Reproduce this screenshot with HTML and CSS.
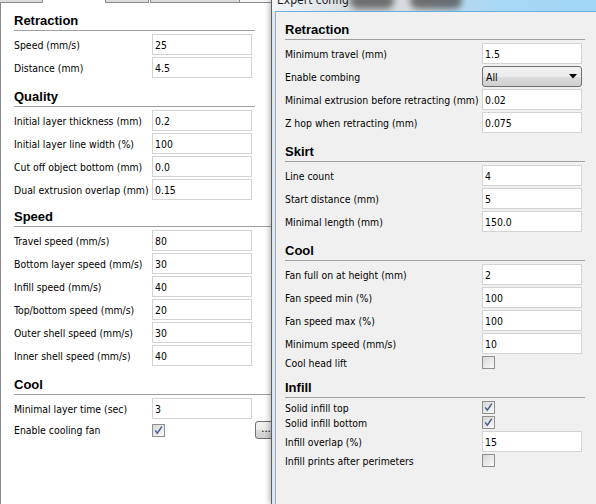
FILE: index.html
```html
<!DOCTYPE html>
<html lang="en">
<head>
    <meta charset="UTF-8">
    <meta name="viewport" content="width=device-width, initial-scale=1.0">
    <title>Expert config</title>
    <link rel="stylesheet" href="styles.css">
</head>
<body>
<div class="screen">

    <!-- main window, advanced tab -->
    <div class="main">
        <div class="tabs">
            <span class="tab tab-1"></span>
            <span class="tab-active"></span>
            <span class="tab tab-3"></span>
            <span class="tab tab-4"></span>
            <span class="tab tab-rest"></span>
        </div>
        <div class="pane">
            <div class="section">
                <h2>Retraction</h2>
                <div class="rows">
                    <div class="row"><span class="label">Speed (mm/s)</span><input class="field" type="text" value="25"></div>
                    <div class="row"><span class="label">Distance (mm)</span><input class="field" type="text" value="4.5"></div>
                </div>
            </div>
            <div class="section">
                <h2>Quality</h2>
                <div class="rows">
                    <div class="row"><span class="label">Initial layer thickness (mm)</span><input class="field" type="text" value="0.2"></div>
                    <div class="row"><span class="label">Initial layer line width (%)</span><input class="field" type="text" value="100"></div>
                    <div class="row"><span class="label">Cut off object bottom (mm)</span><input class="field" type="text" value="0.0"></div>
                    <div class="row"><span class="label">Dual extrusion overlap (mm)</span><input class="field" type="text" value="0.15"></div>
                </div>
            </div>
            <div class="section section-wide section-tight">
                <h2>Speed</h2>
                <div class="rows">
                    <div class="row"><span class="label">Travel speed (mm/s)</span><input class="field" type="text" value="80"></div>
                    <div class="row"><span class="label">Bottom layer speed (mm/s)</span><input class="field" type="text" value="30"></div>
                    <div class="row"><span class="label">Infill speed (mm/s)</span><input class="field" type="text" value="40"></div>
                    <div class="row"><span class="label">Top/bottom speed (mm/s)</span><input class="field" type="text" value="20"></div>
                    <div class="row"><span class="label">Outer shell speed (mm/s)</span><input class="field" type="text" value="30"></div>
                    <div class="row"><span class="label">Inner shell speed (mm/s)</span><input class="field" type="text" value="40"></div>
                </div>
            </div>
            <div class="section section-wide">
                <h2>Cool</h2>
                <div class="rows">
                    <div class="row"><span class="label">Minimal layer time (sec)</span><input class="field" type="text" value="3"></div>
                    <div class="row">
                        <span class="label">Enable cooling fan</span>
                        <span class="cell">
                            <span class="check"><svg width="11" height="11" viewBox="0 0 11 11"><path d="M2.2 5.4 L4.3 8.2 L8.8 1.6" fill="none" stroke="#4c5d8c" stroke-width="1.5"/></svg></span>
                        </span>
                        <button class="more">...</button>
                    </div>
                </div>
            </div>
        </div>
    </div>

    <!-- expert config dialog -->
    <div class="dialog">
        <div class="titlebar">
            <span class="title">Expert config</span>
            <span class="blob blob-1"></span>
            <span class="blob blob-2"></span>
        </div>
        <div class="frame">
            <div class="content">
                <div class="section">
                    <h2>Retraction</h2>
                    <div class="rows">
                        <div class="row"><span class="label">Minimum travel (mm)</span><input class="field" type="text" value="1.5"></div>
                        <div class="row">
                            <span class="label">Enable combing</span>
                            <span class="combo">All<svg width="8" height="5" viewBox="0 0 8 5"><path d="M0 0 H8 L4 4.5 Z" fill="#000"/></svg></span>
                        </div>
                        <div class="row"><span class="label">Minimal extrusion before retracting (mm)</span><input class="field" type="text" value="0.02"></div>
                        <div class="row"><span class="label">Z hop when retracting (mm)</span><input class="field" type="text" value="0.075"></div>
                    </div>
                </div>
                <div class="section">
                    <h2>Skirt</h2>
                    <div class="rows">
                        <div class="row"><span class="label">Line count</span><input class="field" type="text" value="4"></div>
                        <div class="row"><span class="label">Start distance (mm)</span><input class="field" type="text" value="5"></div>
                        <div class="row"><span class="label">Minimal length (mm)</span><input class="field" type="text" value="150.0"></div>
                    </div>
                </div>
                <div class="section">
                    <h2>Cool</h2>
                    <div class="rows">
                        <div class="row"><span class="label">Fan full on at height (mm)</span><input class="field" type="text" value="2"></div>
                        <div class="row"><span class="label">Fan speed min (%)</span><input class="field" type="text" value="100"></div>
                        <div class="row"><span class="label">Fan speed max (%)</span><input class="field" type="text" value="100"></div>
                        <div class="row"><span class="label">Minimum speed (mm/s)</span><input class="field" type="text" value="10"></div>
                        <div class="row"><span class="label">Cool head lift</span><span class="check"></span></div>
                    </div>
                </div>
                <div class="section">
                    <h2>Infill</h2>
                    <div class="rows">
                        <div class="row"><span class="label">Solid infill top</span><span class="check"><svg width="11" height="11" viewBox="0 0 11 11"><path d="M2.2 5.4 L4.3 8.2 L8.8 1.6" fill="none" stroke="#4c5d8c" stroke-width="1.5"/></svg></span></div>
                        <div class="row"><span class="label">Solid infill bottom</span><span class="check"><svg width="11" height="11" viewBox="0 0 11 11"><path d="M2.2 5.4 L4.3 8.2 L8.8 1.6" fill="none" stroke="#4c5d8c" stroke-width="1.5"/></svg></span></div>
                        <div class="row"><span class="label">Infill overlap (%)</span><input class="field" type="text" value="15"></div>
                        <div class="row"><span class="label">Infill prints after perimeters</span><span class="check"></span></div>
                    </div>
                </div>
            </div>
        </div>
    </div>

</div>
</body>
</html>
```

FILE: styles.css
```css
html,
body {
    margin: 0;
    height: 100%;
    overflow: hidden;
}

body {
    font-family: "DejaVu Sans Condensed", "DejaVu Sans", sans-serif;
    font-stretch: condensed;
    font-size: 10.4px;
    color: #000;
    background-color: #fff;
}

.screen {
    display: flex;
    width: 596px;
    height: 504px;
}

/* main window */
.main {
    width: 271px;
    flex-shrink: 0;
    display: flex;
    flex-direction: column;
}

.tabs {
    display: flex;
    height: 3px;
}

.tab {
    height: 2px;
    background-color: #dcdcdc;
    border-bottom: 1px solid #898c95;
}

.tab-1 {
    width: 42px;
    border-right: 1px solid #8c8e94;
}

.tab-active {
    width: 62px;
    background-color: #fff;
}

.tab-3 {
    width: 42px;
    border-left: 1px solid #8c8e94;
    border-right: 1px solid #8c8e94;
}

.tab-4 {
    width: 88px;
    margin-left: 1px;
    border-left: 1px solid #8c8e94;
    border-right: 1px solid #8c8e94;
}

.tab-rest {
    flex: 1;
    background-color: #f6f6f6;
}

.pane {
    flex: 1;
    border-left: 1px solid #898c95;
    background-color: #fff;
    padding: 10px 0 0 13px;
}

.section {
    width: 241px;
}

.section + .section {
    margin-top: 11px;
}

.section-wide {
    width: auto;
}

.main .section-tight {
    margin-top: 9px;
}

h2 {
    margin: 0 0 3px;
    padding-bottom: 1px;
    border-bottom: 1px solid #a0a0a0;
    font: bold 13px/16px "Liberation Sans", Arial, sans-serif;
}

.rows {
    display: flex;
    flex-direction: column;
    gap: 2px;
}

.row {
    display: flex;
    align-items: center;
}

.label {
    width: 138px;
    flex-shrink: 0;
    white-space: nowrap;
}

.cell {
    width: 100px;
    flex-shrink: 0;
    display: flex;
}

.field {
    width: 100px;
    height: 21px;
    flex-shrink: 0;
    box-sizing: border-box;
    margin: 0;
    padding: 0 0 0 2px;
    border: 1px solid #d3d3d3;
    background-color: #fff;
    font: inherit;
    color: #000;
}

.check {
    width: 13px;
    height: 13px;
    flex-shrink: 0;
    box-sizing: border-box;
    border: 1px solid #8e8f8f;
    background: linear-gradient(135deg, #d6d6d6, #fbfbfb);
    display: flex;
    align-items: center;
    justify-content: center;
}

.more {
    width: 22px;
    height: 18px;
    flex-shrink: 0;
    margin-left: 3px;
    padding: 0 0 3px;
    border: 1px solid #707070;
    border-radius: 3px;
    background: linear-gradient(#f2f2f2, #ebebeb 50%, #dddddd 50%, #cfcfcf);
    font: 10px "DejaVu Sans", sans-serif;
    line-height: 12px;
    color: #000;
}

/* expert config dialog */
.dialog {
    flex: 1;
    position: relative;
    z-index: 1;
    display: flex;
    flex-direction: column;
    border-left: 1px solid #595e66;
    background-color: #dfe7ee;
    box-shadow: -2px 0 5px rgba(0, 0, 0, 0.25);
}

.titlebar {
    height: 11px;
    position: relative;
    overflow: hidden;
    padding-left: 5px;
    background: linear-gradient(to right, #f3f5f7 0, #e9edf0 10%, #d4dade 25%, #d6dcdf 45%, #b7d9ee 58%, #a6d8f6 70%, #a3d7f7 100%);
}

.title {
    display: block;
    margin-top: -7px;
    font-size: 12px;
    line-height: 14px;
    color: #1b1b1b;
    position: relative;
    z-index: 1;
}

.blob {
    position: absolute;
    top: -8px;
    height: 17px;
    border-radius: 8px;
    background-color: #4a4a4a;
    filter: blur(3px);
    opacity: 0.75;
}

.blob-1 {
    left: 78px;
    width: 44px;
}

.blob-2 {
    left: 138px;
    width: 52px;
}

.frame {
    flex: 1;
    display: flex;
    padding-left: 3px;
}

.content {
    flex: 1;
    border-left: 1px solid #9aabbb;
    border-top: 1px solid #6aaedb;
    background-color: #f0f0f0;
    padding: 10px 0 0 9px;
}

.content .section {
    width: 300px;
}

.content .label {
    width: 197px;
}

.combo {
    width: 100px;
    height: 21px;
    flex-shrink: 0;
    box-sizing: border-box;
    display: flex;
    align-items: center;
    justify-content: space-between;
    padding: 0 4px 0 3px;
    border: 1px solid #707070;
    border-radius: 3px;
    background: linear-gradient(#f2f2f2, #ebebeb 50%, #dddddd 50%, #cfcfcf);
}
```
